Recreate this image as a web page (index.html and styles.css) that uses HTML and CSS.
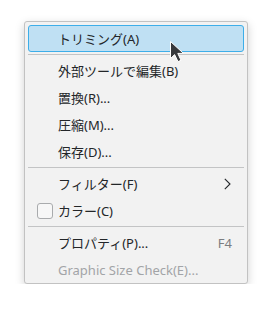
FILE: index.html
```html
<!DOCTYPE html>
<html>
<head>
    <title>Context Menu</title>
    <link rel="stylesheet" href="styles.css">
</head>
<body>
    <div class="menu">
        <div class="item hover">
            <span class="icon"></span>
            <span class="label">トリミング(A)</span>
        </div>
        <div class="sep"></div>
        <div class="item">
            <span class="icon"></span>
            <span class="label">外部ツールで編集(B)</span>
        </div>
        <div class="item">
            <span class="icon"></span>
            <span class="label">置換(R)...</span>
        </div>
        <div class="item">
            <span class="icon"></span>
            <span class="label">圧縮(M)...</span>
        </div>
        <div class="item">
            <span class="icon"></span>
            <span class="label">保存(D)...</span>
        </div>
        <div class="sep"></div>
        <div class="item">
            <span class="icon"></span>
            <span class="label">フィルター(F)</span>
            <svg class="chevron" width="7" height="12" viewBox="0 0 7 12">
                <polyline points="0.8,0.8 6,6 0.8,11.2" fill="none" stroke="#232629" stroke-width="1.1"/>
            </svg>
        </div>
        <div class="item">
            <span class="icon"><span class="check"></span></span>
            <span class="label">カラー(C)</span>
        </div>
        <div class="sep"></div>
        <div class="item">
            <span class="icon"></span>
            <span class="label">プロパティ(P)...</span>
            <span class="shortcut">F4</span>
        </div>
        <div class="item disabled">
            <span class="icon"></span>
            <span class="label">Graphic Size Check(E)...</span>
        </div>
    </div>

    <!-- mouse pointer over the first item -->
    <svg class="cursor" width="18" height="24" viewBox="0 0 18 24">
        <path d="M1.5 1.5 L1.5 18.5 L5.6 14.6 L9 21.6 L12 20.3 L8.8 13.4 L14.5 13.4 Z" fill="#383a3d" stroke="#ffffff" stroke-width="1" stroke-linejoin="round"/>
    </svg>
</body>
</html>
```

FILE: styles.css
```css
body {
    margin: 0;
    background-color: #ffffff;
    font-family: "Noto Sans", "Noto Sans CJK JP", sans-serif;
    font-size: 13px;
    color: #232629;
}
.menu {
    width: 216px;
    margin: 21px 0 0 24px;
    padding: 3px 3px 0 3px;
    background-color: #f2f2f2;
    border: 1px solid #c2c2c2;
    border-radius: 3px;
    box-shadow: 0 3px 10px rgba(0,0,0,0.18);
}
.item {
    display: flex;
    align-items: center;
    height: 27px;
    padding: 0 11px 0 8px;
    box-sizing: border-box;
    border: 1px solid transparent;
    border-radius: 3px;
}
.item.hover {
    background-color: #bfe0f3;
    border-color: #3daee9;
}
.icon {
    width: 16px;
    height: 16px;
    margin-right: 5px;
    flex-shrink: 0;
}
.check {
    display: block;
    width: 16px;
    height: 16px;
    box-sizing: border-box;
    border: 1px solid #a9abad;
    border-radius: 3px;
    background-color: #f7f7f7;
}
.label {
    flex: 1;
    white-space: nowrap;
}
.shortcut {
    color: #7b7d80;
}
.chevron {
    margin-right: 1px;
}
.disabled {
    color: #a2a4a7;
}
.sep {
    height: 1px;
    margin: 2px 0;
    background-color: #c3c4c5;
}
.cursor {
    position: absolute;
    left: 169px;
    top: 40px;
}
```
